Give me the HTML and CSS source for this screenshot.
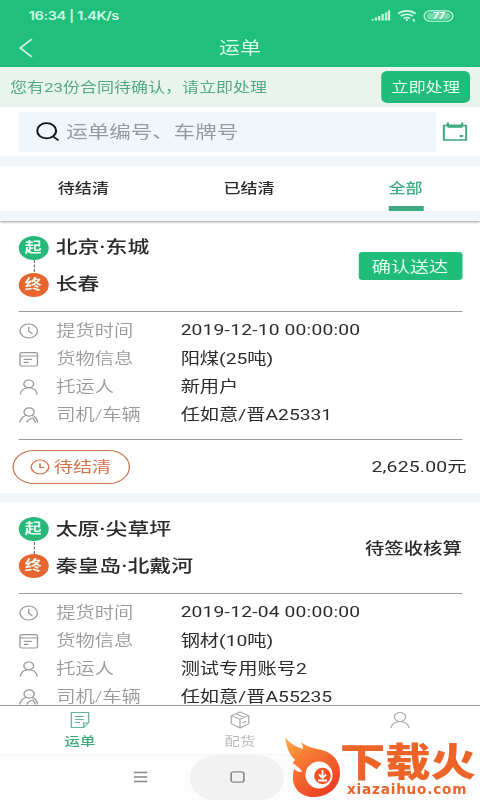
FILE: index.html
```html
<!DOCTYPE html>
<html lang="zh-CN">
<head>
<meta charset="utf-8">
<title>运单</title>
<link rel="stylesheet" href="styles.css">
</head>
<body>
<svg class="defs" width="0" height="0">
  <defs>
    <symbol id="clock" viewBox="0 0 16 16"><circle cx="8" cy="8" r="7"/><path d="M8 3.800V8l2.800 2.800"/></symbol>
    <symbol id="goods" viewBox="0 0 16 16"><rect x="1" y="1.600" width="14" height="13.400" rx="1.500"/><path d="M1 5h14M4 8.400h6.500M4 11.400h4"/></symbol>
    <symbol id="person" viewBox="0 0 16 16"><circle cx="8" cy="4.900" r="3.900"/><path d="M1.200 15.500c.6-4.500 3-6.700 6.800-6.700s6.200 2.200 6.800 6.700"/></symbol>
    <symbol id="driver" viewBox="0 0 16 16"><circle cx="8.300" cy="5" r="4.100"/><path d="M.7 15.500c.8-3.700 2.500-6 5.300-7.200M10.500 8.300c2.800 1.200 4.200 3.700 4.700 7.200M6.500 15.500c.7-2.300 2.400-4.200 5-4.500M11.500 11l2 4.500"/></symbol>
  </defs>
</svg>
<div class="screen">
  <header class="top">
    <div class="status">
      <span class="time">16:34 | 1.4K/s</span>
      <svg class="signals" width="66" height="14" viewBox="0 0 66 14">
        <path d="M1 11.500v-1.500M3.700 11.500V8.500M6.400 11.500V7M9.100 11.500V5M11.800 11.500V3.500M14.200 11.500V1.500" stroke="#c9f6df" stroke-width="1.800"/>
        <g fill="none" stroke="#d5fae7" stroke-width="1.600"><path d="M21.500 4.700c4-3.800 10-3.800 14 0M23.700 7.200c2.800-2.600 6.800-2.600 9.600 0M26 9.500c1.600-1.300 3.400-1.300 5 0"/><path d="M28.500 10v2M34 10v2.500"/></g>
        <rect x="42.300" y="1.900" width="23" height="10.400" rx="5.200" fill="none" stroke="#c9f6df" stroke-width="1.100"/>
        <rect x="44.300" y="3.700" width="19" height="6.800" rx="3.400" fill="#75dbac"/>
        <text x="54" y="10.200" class="battery">77</text>
      </svg>
    </div>
    <div class="titlebar">
      <svg class="back" width="12" height="20" viewBox="0 0 12 20"><path d="M10.500 1 1.200 10l9.300 9"/></svg>
      <h1>运单</h1>
    </div>
  </header>
  <div class="notice"><span>您有23份合同待确认，请立即处理</span><button>立即处理</button></div>
  <div class="searchrow">
    <div class="search">
      <svg width="19" height="20" viewBox="0 0 19 20"><circle cx="8.300" cy="8.800" r="7.600"/><path d="m13.600 14.500 4.200 4"/></svg>
      <span>运单编号、车牌号</span>
    </div>
    <svg class="calendar" width="20" height="20" viewBox="0 0 20 20"><rect x="1" y="3.500" width="18" height="14.500"/><path d="M4 4.300h12" stroke-width="3"/><path d="M4.300 .5v4M15.700 .5v4" stroke-width="1.800"/><path d="M13.700 14h2.800" stroke-width="2.200"/></svg>
  </div>
  <nav class="tabs"><span>待结清</span><span>已结清</span><span class="active">全部</span></nav>
  <main class="list">
    <article class="card">
      <div class="route">
        <div class="places">
          <div class="place"><b class="dot start">起</b><span>北京·东城</span></div>
          <div class="place"><b class="dot end">终</b><span>长春</span></div>
        </div>
        <button class="confirm">确认送达</button>
      </div>
      <div class="details">
        <div class="row"><svg><use href="#clock"/></svg><label>提货时间</label><span class="num">2019-12-10 00:00:00</span></div>
        <div class="row"><svg><use href="#goods"/></svg><label>货物信息</label><span>阳煤(25吨)</span></div>
        <div class="row"><svg><use href="#person"/></svg><label>托运人</label><span>新用户</span></div>
        <div class="row"><svg><use href="#driver"/></svg><label>司机/车辆</label><span>任如意/晋A25331</span></div>
      </div>
      <div class="foot">
        <div class="state"><svg viewBox="0 0 16 16"><circle cx="8" cy="8" r="7"/><path d="M8 4.500V8.500h3.500"/></svg><span>待结清</span></div>
        <span class="amount">2,625.00元</span>
      </div>
    </article>
    <article class="card">
      <div class="route">
        <div class="places">
          <div class="place"><b class="dot start">起</b><span>太原·尖草坪</span></div>
          <div class="place"><b class="dot end">终</b><span>秦皇岛·北戴河</span></div>
        </div>
        <strong>待签收核算</strong>
      </div>
      <div class="details">
        <div class="row"><svg><use href="#clock"/></svg><label>提货时间</label><span class="num">2019-12-04 00:00:00</span></div>
        <div class="row"><svg><use href="#goods"/></svg><label>货物信息</label><span>钢材(10吨)</span></div>
        <div class="row"><svg><use href="#person"/></svg><label>托运人</label><span>测试专用账号2</span></div>
        <div class="row"><svg><use href="#driver"/></svg><label>司机/车辆</label><span>任如意/晋A55235</span></div>
      </div>
    </article>
  </main>
  <nav class="bottom">
    <div class="item on"><svg viewBox="0 0 16 18"><path d="M1 1.500h14v10l-4 5H1zM11 16.500v-4.500h4M4 5.500h7M4 8.500h7M4 11.500h4"/></svg><span>运单</span></div>
    <div class="item"><svg viewBox="0 0 16 18"><path d="m8 1 7 3.600v8L8 17l-7-4.400v-8zM1 4.600 8 8.200l7-3.600M8 8.200V17M4.500 2.800l7 3.600M10 12l3-1.700"/></svg><span>配货</span></div>
    <div class="item"><svg viewBox="0 0 16 18"><circle cx="8" cy="6" r="4.500"/><path d="M.7 17c.8-4 3.300-6.500 7.300-6.500s6.500 2.500 7.300 6.500"/></svg></div>
  </nav>
  <div class="system">
    <svg width="11" height="12" viewBox="0 0 11 12"><path d="M0 1.500h11M0 6h11M0 10.500h11"/></svg>
    <div class="home"><svg width="12" height="12" viewBox="0 0 12 12"><rect x=".9" y=".8" width="10.200" height="10.400" rx="2"/></svg></div>
  </div>
</div>
<div class="watermark">
  <svg width="56" height="62" viewBox="0 0 56 62">
    <defs><linearGradient id="flame" x1="0" y1="0" x2=".7" y2="1"><stop offset="0" stop-color="#ffb347"/><stop offset=".4" stop-color="#f77932"/><stop offset="1" stop-color="#eb3e24"/></linearGradient></defs>
    <path fill="url(#flame)" d="M1 1c5 7 10 9 18 12 0-3-1-5-2-7 7 6 15 6 24 9 10 4 15 12 15 22 0 14-11 24-27 24C16 61 8 51 9 40c0-4 1-6 1-7 2 2 4 3 8 3-1-3-4-5-8-8 0 0-3 0 1-4C5 18 2 10 1 1z"/>
    <circle cx="35" cy="39" r="13.500" fill="#fff"/><circle cx="38.500" cy="40" r="8.300" fill="#ed5527"/>
    <path d="M38.500 34v8M35 38.500l3.500 3.500 3.500-3.500M34 44.500h9" fill="none" stroke="#fff" stroke-width="1.800"/>
  </svg>
  <div class="brand"><b>下载火</b><span>xiazaihuo.com</span></div>
</div>
</body>
</html>
```
FILE: styles.css
```css
* { box-sizing: border-box; }
body {
  margin: 0;
  width: 480px;
  height: 800px;
  overflow: hidden;
  background: #fff;
  font-family: Roboto, "Noto Sans CJK SC", sans-serif;
  color: #2b2b2b;
}
.defs { position: absolute; }
svg { flex: none; fill: none; stroke-linejoin: round; }
button { border: 0; padding: 0 0 2px; font-family: inherit; color: #e4fff1; background: #20bd7a; }

/* The 384px wide layout is stretched to the full window width. */
.screen {
  width: 384px;
  height: 800px;
  display: flex;
  flex-direction: column;
  transform: scaleX(1.25);
  transform-origin: 0 0;
}
.top { height: 67px; flex: none; background: #20bf7b; }
.status { height: 30px; display: flex; align-items: center; justify-content: space-between; padding: 1px 21px 0 23px; }
.time { font: 600 11.6px/16px Inter, sans-serif; color: #d2fae6; letter-spacing: -.3px; white-space: nowrap; }
.battery { font: bold italic 8.500px Roboto, sans-serif; fill: #fff; text-anchor: middle; }
.titlebar { height: 36px; display: flex; align-items: center; padding: 0 15px; }
.back { stroke: #d8ffec; stroke-width: 1.600; }
h1 { flex: 1; margin: 0 12px 0 0; font-size: 16.8px; font-weight: 400; line-height: 24px; text-align: center; color: #d8ffec; }

.notice { height: 40px; flex: none; display: flex; align-items: center; justify-content: space-between; padding: 0 8px; background: #e9f4ec; color: #54a98a; font-size: 13.6px; white-space: nowrap; }
.notice span { padding-bottom: 2px; }
.notice button { width: 71px; height: 32px; border-radius: 5px; font-size: 13.8px; }

.searchrow { height: 50px; flex: none; display: flex; align-items: center; gap: 5px; padding: 0 10px 0 15px; }
.search { width: 335px; height: 40px; display: flex; align-items: center; gap: 5px; padding-left: 14px; background: #f1f6fb; color: #949a9f; font-size: 17.200px; }
.search svg { stroke: #15181b; stroke-width: 1.700; }
.search span { line-height: 24px; }
.calendar { stroke: #3caa7f; stroke-width: 1.700; }

.tabs { height: 64px; flex: none; display: flex; border: solid #f1f6fb; border-width: 9px 0 10px; box-shadow: 0 1px 2px #999; font-size: 13.700px; font-weight: 500; line-height: 44px; position: relative; }
.tabs span { width: 132.500px; padding-left: 1px; text-align: center; }
.tabs span.active { width: 119px; padding: 0; color: #3caa7f; }
.active::after { content: ""; display: block; width: 28px; height: 5px; margin: -4px auto 0; background: #3caa7f; }

.list { height: 484px; flex: none; overflow: hidden; }
.card { padding: 11px 14.500px 0; }
.card + .card { border-top: 9px solid #f1f6fb; }
.route { height: 79px; display: flex; justify-content: space-between; align-items: center; }
.places { display: flex; flex-direction: column; gap: 12px; margin-top: -11px; position: relative; }
.places::before { content: ""; position: absolute; left: 12px; top: 25px; height: 12px; border-left: 1px dashed #777; }
.place { height: 25px; display: flex; align-items: center; gap: 6px; font-size: 17.500px; font-weight: 500; white-space: nowrap; }
.place span { padding-bottom: 4px; }
.dot { width: 24px; height: 24px; border-radius: 50%; font-size: 13.500px; line-height: 23px; font-weight: 700; text-align: center; color: #e6fff2; }
.start { background: #27b87a; }
.end { background: #e86530; }
.confirm { width: 83px; height: 28px; border-radius: 3px; font-size: 15.300px; margin-top: -12px; }
.route strong { font-size: 15.500px; font-weight: 500; line-height: 22px; margin-top: -9px; }
.card + .card .route { height: 80px; }
.details { height: 129px; padding-top: 5px; border: solid #999; border-width: 1px 0; }
.card + .card .details { border-bottom: 0; }
.row { height: 28px; display: flex; align-items: center; font-size: 15.400px; white-space: nowrap; }
.row svg { width: 16px; height: 16px; stroke: #999; stroke-width: 1.100; }
.row label { width: 99.500px; margin-left: 14.500px; padding-bottom: 4px; color: #999; font-weight: 350; }
.row span { padding-bottom: 4px; }
.row .num { padding-bottom: 2px; letter-spacing: .15px; }
.foot { height: 53px; display: flex; align-items: center; justify-content: space-between; margin: 0 -4px; }
.state { width: 94px; height: 34px; display: flex; align-items: center; justify-content: center; gap: 3px; margin-left: -1px; border: 1px solid #c9764f; border-radius: 17px; color: #d4734b; font-size: 15.300px; }
.state span { padding-bottom: 3px; }
.state svg { width: 16px; height: 16px; stroke: #d4734b; stroke-width: 1.200; }
.amount { padding-bottom: 4px; font-size: 15.500px; letter-spacing: .15px; }

.bottom { height: 49px; flex: none; display: flex; background: #fff; border-top: 1px solid #999; }
.item { flex: 1; display: flex; flex-direction: column; align-items: center; padding-top: 5px; color: #bbb; font-size: 12.300px; line-height: 18px; }
.item svg { width: 18px; height: 18px; margin-bottom: 4px; stroke: #aaa; stroke-width: 1; }
.item.on { color: #3caa7f; font-weight: 500; }
.item.on svg { stroke: #62b494; }
.system { height: 46px; flex: none; display: flex; align-items: center; padding-left: 107px; gap: 34px; background: #fdfdfd; border-top: 1px solid #f6f6f6; }
.system svg { margin-top: -2px; stroke: #888; stroke-width: 1.300; }
.home { width: 75px; height: 46px; display: flex; align-items: center; justify-content: center; border-radius: 22px; background: #f2f2f2; }

.watermark { position: absolute; left: 284px; top: 736px; width: 196px; height: 64px; display: flex; }
.brand { color: #ed6428; }
.brand b { display: block; height: 46px; font: 900 39px/47px "Noto Sans CJK SC", sans-serif; white-space: nowrap; transform: scaleX(1.160); transform-origin: 0 0; }
.brand span { display: block; margin-left: 7px; font: bold 13.600px/15px "DejaVu Sans", sans-serif; letter-spacing: .8px; }
```
